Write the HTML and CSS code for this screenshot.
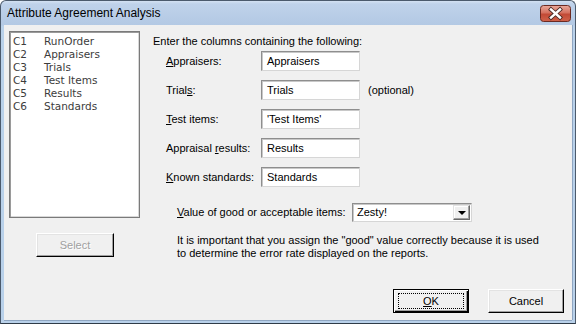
FILE: index.html
```html
<!DOCTYPE html>
<html>

<head>
    <meta charset="UTF-8">
    <title>Attribute Agreement Analysis</title>
    <link rel="stylesheet" href="styles.css">
</head>

<body>
    <div class="window">
        <div class="titlebar">
            <span class="title">Attribute Agreement Analysis</span>
            <div class="close">
                <svg width="31" height="17" viewBox="0 0 31 17">
                    <defs>
                        <linearGradient id="red" x1="0" y1="0" x2="0" y2="1">
                            <stop offset="0" stop-color="#e9a99c" />
                            <stop offset="0.45" stop-color="#d5715f" />
                            <stop offset="0.55" stop-color="#c24a36" />
                            <stop offset="1" stop-color="#d0624a" />
                        </linearGradient>
                    </defs>
                    <rect x="0.5" y="0.5" width="30" height="16" rx="3" fill="url(#red)" stroke="#6b2a22" />
                    <path d="M11 4.5 L20 12.5 M20 4.5 L11 12.5" stroke="#4a2a26" stroke-width="4.2" stroke-linecap="square" />
                    <path d="M11 4.5 L20 12.5 M20 4.5 L11 12.5" stroke="#fff" stroke-width="2.4" stroke-linecap="square" />
                </svg>
            </div>
        </div>

        <div class="client">
            <div class="main">
                <div class="left">
                    <div class="listbox">
                        <div class="item"><span class="col">C1</span>RunOrder</div>
                        <div class="item"><span class="col">C2</span>Appraisers</div>
                        <div class="item"><span class="col">C3</span>Trials</div>
                        <div class="item"><span class="col">C4</span>Test Items</div>
                        <div class="item"><span class="col">C5</span>Results</div>
                        <div class="item"><span class="col">C6</span>Standards</div>
                    </div>
                    <div class="btn btn_select">Select</div>
                </div>

                <div class="right">
                    <div class="heading">Enter the columns containing the following:</div>

                    <div class="field first">
                        <span class="label"><u>A</u>ppraisers:</span>
                        <div class="textbox">Appraisers</div>
                    </div>
                    <div class="field">
                        <span class="label">Trial<u>s</u>:</span>
                        <div class="textbox">Trials</div>
                        <span class="note">(optional)</span>
                    </div>
                    <div class="field">
                        <span class="label"><u>T</u>est items:</span>
                        <div class="textbox">'Test Items'</div>
                    </div>
                    <div class="field">
                        <span class="label">Appraisal <u>r</u>esults:</span>
                        <div class="textbox">Results</div>
                    </div>
                    <div class="field">
                        <span class="label"><u>K</u>nown standards:</span>
                        <div class="textbox">Standards</div>
                    </div>

                    <div class="good">
                        <span class="good_label"><u>V</u>alue of good or acceptable items:</span>
                        <div class="combo">
                            <span class="combo_text">Zesty!</span>
                            <div class="combo_btn"><span class="arrow"></span></div>
                        </div>
                    </div>

                    <p class="info">
                        It is important that you assign the "good" value correctly because it is used<br>
                        to determine the error rate displayed on the reports.
                    </p>
                </div>
            </div>

            <div class="footer">
                <div class="btn btn_default"><span class="focus"><u>O</u>K</span></div>
                <div class="btn">Cancel</div>
            </div>
        </div>
    </div>
</body>

</html>
```

FILE: styles.css
```css
body {
    margin: 0;
    font-family: "Liberation Sans", Arial, sans-serif;
    font-size: 11px;
    color: #000;
    background: #fff;
}

.window {
    width: 576px;
    height: 324px;
    box-sizing: border-box;
    border: 1px solid #4b5a6c;
    border-bottom-color: #2f3b48;
    border-radius: 6px 6px 0 0;
    padding: 0 3px 3px 3px;
    background: linear-gradient(to bottom, #d3e1f2 0, #bfd2ea 3px, #b3c9e4 24px, #b9d1ea 25px, #b9d1ea 100%);
    display: flex;
    flex-direction: column;
    overflow: hidden;
}

.titlebar {
    height: 24px;
    display: flex;
    align-items: center;
    padding-left: 3px;
}

.title {
    font-size: 12px;
    color: #000;
}

.close {
    margin-left: auto;
    margin-right: 1px;
    align-self: flex-start;
    margin-top: 4px;
    height: 17px;
}

.close svg {
    display: block;
}

.client {
    flex: 1;
    background: #f0f0f0;
    display: flex;
    flex-direction: column;
    padding: 6px 8px 7px 5px;
    box-shadow: 1px 0 0 #8fa6c2, 0 1px 0 #8fa6c2;
}

.main {
    display: flex;
}

.left {
    width: 131px;
    display: flex;
    flex-direction: column;
}

.listbox {
    height: 187px;
    box-sizing: border-box;
    background: #fff;
    border: 1px solid #7a7a7a;
    box-shadow: inset 1px 1px 0 #9a9a9a, inset -1px -1px 0 #d8d8d8;
    padding: 3px 3px;
    color: #3c3c3c;
    font-family: "DejaVu Sans", sans-serif;
    font-size: 10.5px;
}

.item {
    height: 13px;
    line-height: 13px;
    white-space: nowrap;
}

.col {
    display: inline-block;
    width: 31px;
}

.btn {
    width: 76px;
    height: 24px;
    box-sizing: border-box;
    background: #f0f0f0;
    border: 1px solid;
    border-color: #fff #000 #000 #fff;
    box-shadow: inset -1px -1px 0 #a0a0a0, inset 1px 1px 0 #e3e3e3;
    display: flex;
    align-items: center;
    justify-content: center;
}

.btn_select {
    margin-top: 15px;
    margin-left: 27px;
    width: 78px;
    color: #a0a0a0;
    text-shadow: 1px 1px 0 #fff;
}

.right {
    margin-left: 13px;
    padding-top: 4px;
    flex: 1;
}

.heading {
    line-height: 13px;
}

.field {
    display: flex;
    align-items: center;
    height: 20px;
    margin-top: 9px;
    padding-left: 13px;
}

.field.first {
    margin-top: 3px;
}

.label {
    width: 95px;
}

.textbox {
    width: 99px;
    height: 20px;
    box-sizing: border-box;
    background: #fff;
    border: 1px solid;
    border-color: #8e8e8e #d6d6d6 #d6d6d6 #8e8e8e;
    box-shadow: inset 1px 1px 0 #c8c8c8;
    padding-left: 5px;
    line-height: 18px;
}

.note {
    margin-left: 8px;
}

.good {
    display: flex;
    align-items: center;
    margin-top: 16px;
    padding-left: 24px;
    height: 18px;
}

.good_label {
    width: 175px;
}

.combo {
    width: 120px;
    height: 19px;
    box-sizing: border-box;
    background: #fff;
    border: 1px solid;
    border-color: #8e8e8e #d6d6d6 #d6d6d6 #8e8e8e;
    box-shadow: inset 1px 1px 0 #c8c8c8;
    display: flex;
    align-items: center;
    padding: 1px;
}

.combo_text {
    flex: 1;
    padding-left: 3px;
}

.combo_btn {
    width: 17px;
    height: 15px;
    box-sizing: border-box;
    background: #f0f0f0;
    border: 1px solid;
    border-color: #e3e3e3 #696969 #696969 #e3e3e3;
    box-shadow: inset -1px -1px 0 #a0a0a0, inset 1px 1px 0 #fff;
    display: flex;
    align-items: center;
    justify-content: center;
}

.arrow {
    width: 0;
    height: 0;
    border-left: 4px solid transparent;
    border-right: 4px solid transparent;
    border-top: 4px solid #000;
    margin-top: 1px;
}

.info {
    margin: 13px 0 0 0;
    padding-left: 24px;
    line-height: 13px;
}

.footer {
    margin-top: auto;
    display: flex;
    justify-content: flex-end;
    gap: 19px;
}

.btn_default {
    border: 1px solid #000;
    box-shadow: inset 1px 1px 0 #fff, inset -1px -1px 0 #000, inset -2px -2px 0 #a0a0a0;
}

.focus {
    width: 64px;
    height: 14px;
    border: 1px dotted #000;
    display: flex;
    align-items: center;
    justify-content: center;
}
```
